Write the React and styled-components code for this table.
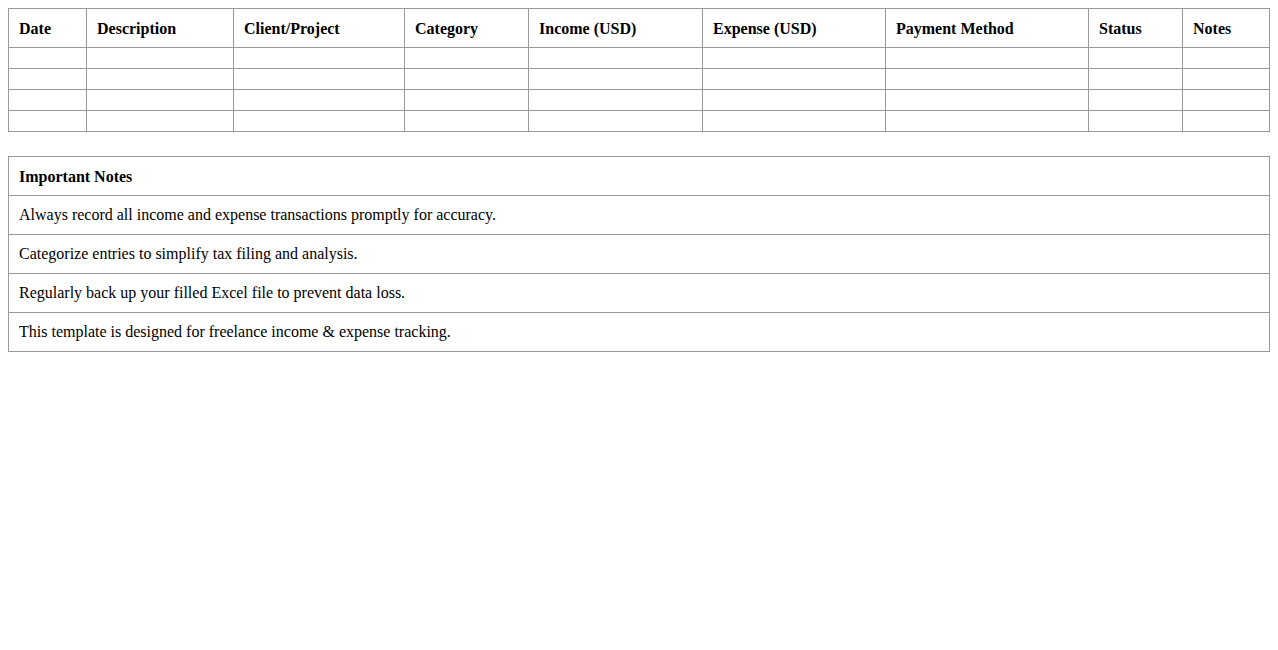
import React from 'react'
import styled, { createGlobalStyle } from 'styled-components'

const GlobalStyle = createGlobalStyle`
    body {
        margin: 8px;
        background: #fff;
        font-family: "Liberation Serif", "Times New Roman", serif;
        font-size: 16px;
        color: #000;
    }
`;

const Sheet = styled.table`
    width: 100%;
    border-collapse: collapse;
    table-layout: fixed;
    margin-bottom: 24px;
`;

const HeadCell = styled.th`
    box-sizing: border-box;
    ${props => props.w && `width: ${props.w}px;`}
    border: 1px solid #999;
    padding: 11px 10px 9px;
    text-align: left;
    font-weight: bold;
`;

const Cell = styled.td`
    border: 1px solid #999;
    padding: 10px;
`;

const columns = [
    { title: 'Date', w: 78 },
    { title: 'Description', w: 147 },
    { title: 'Client/Project', w: 171 },
    { title: 'Category', w: 124 },
    { title: 'Income (USD)', w: 174 },
    { title: 'Expense (USD)', w: 183 },
    { title: 'Payment Method', w: 203 },
    { title: 'Status', w: 94 },
    { title: 'Notes' },
];

const notes = [
    'Always record all income and expense transactions promptly for accuracy.',
    'Categorize entries to simplify tax filing and analysis.',
    'Regularly back up your filled Excel file to prevent data loss.',
    'This template is designed for freelance income & expense tracking.',
];

export default function App() {
    return (
        <>
            <GlobalStyle />
            <Sheet>
                <thead>
                    <tr>
                        {columns.map(c => <HeadCell key={c.title} w={c.w}>{c.title}</HeadCell>)}
                    </tr>
                </thead>
                <tbody>
                    {[0, 1, 2, 3].map(r =>
                        <tr key={r}>
                            {columns.map(c => <Cell key={c.title} />)}
                        </tr>
                    )}
                </tbody>
            </Sheet>
            <Sheet>
                <thead>
                    <tr><HeadCell>Important Notes</HeadCell></tr>
                </thead>
                <tbody>
                    {notes.map(n => <tr key={n}><Cell>{n}</Cell></tr>)}
                </tbody>
            </Sheet>
        </>
    )
}
